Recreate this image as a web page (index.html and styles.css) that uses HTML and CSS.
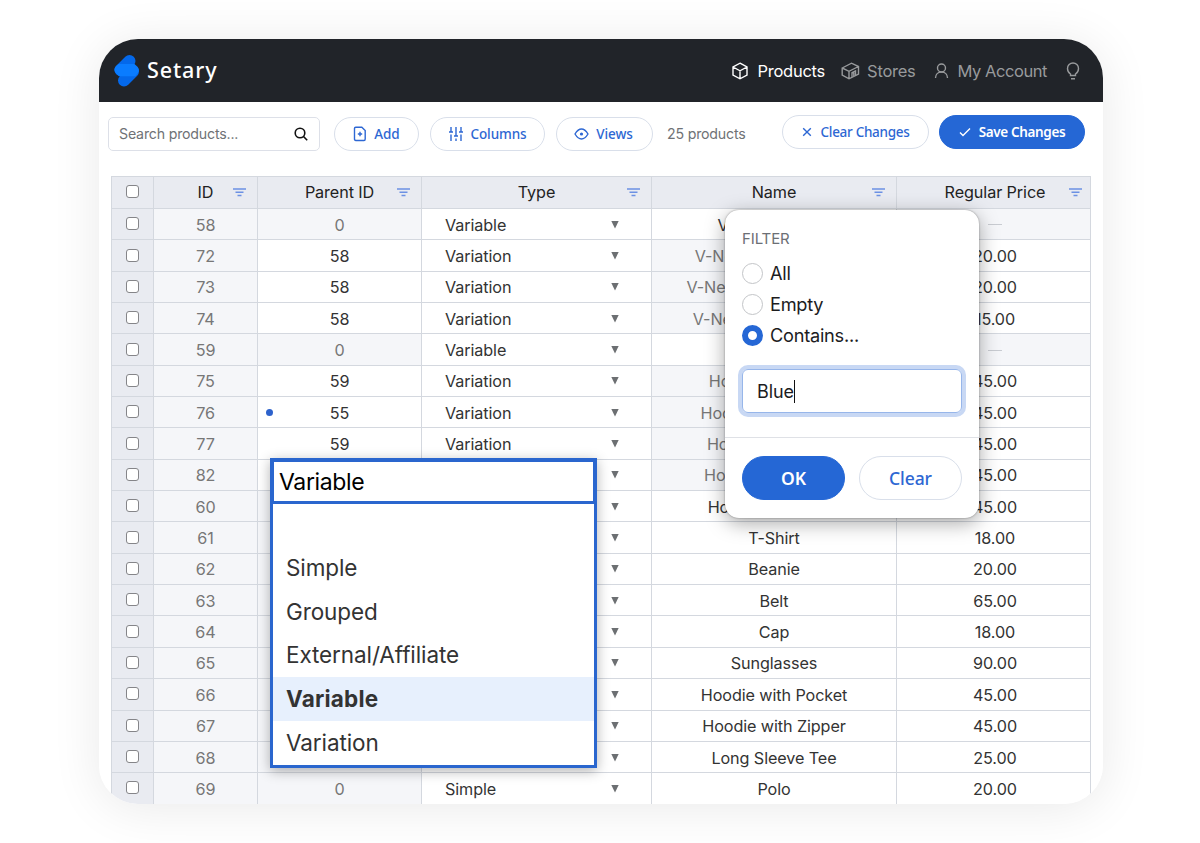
FILE: index.html
```
<!DOCTYPE html>
<html lang="en">
<head>
    <meta charset="UTF-8">
    <meta name="viewport" content="width=device-width, initial-scale=1.0">
    <title>Setary - Products</title>
    <link rel="stylesheet" href="styles.css">
</head>
<body>
    <div class="window">
        <header class="topbar">
            <div class="brand">
                <svg class="logo" width="26" height="32" viewBox="0 0 26 32">
                    <path class="logo-dark" d="M6.500 15 15.500 6M19 16.500 10 25.500"/>
                    <path d="M4.500 9H20.500L23.500 11.800Q26.500 15.500 23.200 19L21.300 21.200H5L2 18.500Q-1.200 15 1.800 11.300Z" fill="#0a7cff"/>
                </svg>
                <span class="brand-name">Setary</span>
            </div>
            <nav class="nav">
                <a class="nav-item active">
                    <svg width="18" height="18" viewBox="0 0 18 18"><path d="M9 1.200 16 5V13L9 16.800 2 13V5ZM2 5 9 8.800 16 5M9 8.800V16.800"/></svg>
                    <span>Products</span>
                </a>
                <a class="nav-item nav-stores">
                    <svg width="19" height="18" viewBox="0 0 19 18"><path d="M1.200 6 10.500 1.200 17.500 4.500V12L8 16.800 1.200 13ZM1.200 6 8 9.300 17.500 4.500M8 9.300V16.800M11 15.200V10.800L14.500 9V13.500M12.800 10V14.400"/></svg>
                    <span>Stores</span>
                </a>
                <a class="nav-item nav-account">
                    <svg width="15" height="18" viewBox="0 0 15 18"><circle cx="7.500" cy="6" r="4"/><path d="M1.500 16C1.500 12.500 4 10 7.500 10S13.500 12.500 13.500 16"/></svg>
                    <span>My Account</span>
                </a>
                <a class="nav-item nav-tips">
                    <svg width="14" height="18" viewBox="0 0 14 18"><path d="M4.500 13.500V12C2.500 10.800 1.500 9 1.500 6.500A5.500 5.500 0 0 1 12.500 6.500C12.500 9 11.500 10.800 9.500 12V13.500ZM5 16.800H9"/></svg>
                </a>
            </nav>
        </header>

        <div class="toolbar">
            <div class="search">
                <span>Search products...</span>
                <svg width="14" height="14" viewBox="0 0 14 14"><circle cx="6" cy="6" r="4.800"/><path d="M9.500 9.500 13.200 13.200"/></svg>
            </div>
            <button class="btn btn-add">
                <svg width="14" height="16" viewBox="0 0 14 16"><path d="M1.500 2.500Q1.500 1.200 2.800 1.200H8.800L12.200 4.500V13Q12.200 14.500 11 14.500H2.800Q1.500 14.500 1.500 13ZM7 5.800V10.200M4.800 8H9.200"/></svg>
                <span>Add</span>
            </button>
            <button class="btn btn-columns">
                <svg width="16" height="14" viewBox="0 0 16 14"><path d="M3 0V4.500M1 5H5M3 7.500V14M8 0V8.500M6 9H10M8 11.500V14M13 0V4.500M11 5H15M13 7.500V14"/></svg>
                <span>Columns</span>
            </button>
            <button class="btn btn-views">
                <svg width="15" height="12" viewBox="0 0 15 12"><path d="M1 6Q4 1 7.500 1T14 6Q11 11 7.500 11T1 6Z"/><circle class="solid" cx="7.500" cy="6" r="1.600"/></svg>
                <span>Views</span>
            </button>
            <span class="count">25 products</span>
            <div class="actions">
                <button class="btn btn-discard">
                    <svg width="10" height="10" viewBox="0 0 10 10"><path d="M1.200 1.200 8.800 8.800M8.800 1.200 1.200 8.800"/></svg>
                    <span>Clear Changes</span>
                </button>
                <button class="btn btn-primary btn-save">
                    <svg width="12" height="10" viewBox="0 0 12 10"><path d="M1 5.500 4 8.500 11 1.500"/></svg>
                    <span>Save Changes</span>
                </button>
            </div>
        </div>

        <div class="sheet" id="sheet"></div>

        <div class="editor">
            <div class="editor-input">Variable</div>
            <ul class="options">
                <li></li>
                <li>Simple</li>
                <li>Grouped</li>
                <li>External/Affiliate</li>
                <li class="selected">Variable</li>
                <li>Variation</li>
            </ul>
        </div>

        <div class="filter">
            <div class="filter-body">
                <h2>FILTER</h2>
                <div class="radio"><i></i><span>All</span></div>
                <div class="radio"><i></i><span>Empty</span></div>
                <div class="radio checked"><i></i><span>Contains...</span></div>
                <div class="filter-input"><span>Blue</span></div>
            </div>
            <div class="filter-footer">
                <button class="btn btn-primary">OK</button>
                <button class="btn">Clear</button>
            </div>
        </div>
    </div>

    <script>
        // id, parent, type, name, price
        const products = [
            [58, 0, "Variable", "V-Neck T-Shirt", ""],
            [72, 58, "Variation", "V-Neck T-Shirt - Red", "20.00"],
            [73, 58, "Variation", "V-Neck T-Shirt - Green", "20.00"],
            [74, 58, "Variation", "V-Neck T-Shirt - Blue", "15.00"],
            [59, 0, "Variable", "Hoodie", ""],
            [75, 59, "Variation", "Hoodie - Red, No", "45.00"],
            [76, 55, "Variation", "Hoodie - Green, No", "45.00"],
            [77, 59, "Variation", "Hoodie - Blue, No", "45.00"],
            [82, 59, "Variation", "Hoodie - Blue, Yes", "45.00"],
            [60, 0, "Simple", "Hoodie with Logo", "45.00"],
            [61, 0, "Simple", "T-Shirt", "18.00"],
            [62, 0, "Simple", "Beanie", "20.00"],
            [63, 0, "Simple", "Belt", "65.00"],
            [64, 0, "Simple", "Cap", "18.00"],
            [65, 0, "Simple", "Sunglasses", "90.00"],
            [66, 0, "Simple", "Hoodie with Pocket", "45.00"],
            [67, 0, "Simple", "Hoodie with Zipper", "45.00"],
            [68, 0, "Simple", "Long Sleeve Tee", "25.00"],
            [69, 0, "Simple", "Polo", "20.00"]
        ];

        const funnel = '<svg class="funnel" width="13" height="9" viewBox="0 0 13 9"><path d="M0 1H13M2.500 4.300H10.500M4.500 7.500H8.500"/></svg>';
        const box = '<div class="cell cell-check"><i class="checkbox"></i></div>';

        function headRow() {
            const titles = ["ID", "Parent ID", "Type", "Name", "Regular Price"];
            return `<div class="row head">${box}${titles.map(t => `<div class="cell"><span>${t}</span>${funnel}</div>`).join("")}</div>`;
        }

        function productRow([id, parent, type, name, price]) {
            const variation = type === "Variation";
            const edited = id === 76 ? " edited" : "";
            return `<div class="row">${box}
                <div class="cell locked">${id}</div>
                <div class="cell${variation ? "" : " locked"}${edited}">${parent}</div>
                <div class="cell cell-type"><span>${type}</span><svg width="8" height="8" viewBox="0 0 8 8"><path d="M.3 0H7.700L4 7.500Z"/></svg></div>
                <div class="cell${variation ? " locked" : ""}">${name}</div>
                <div class="cell cell-price${price ? "" : " locked"}">${price || '<i class="dash"></i>'}</div>
            </div>`;
        }

        document.getElementById("sheet").innerHTML = headRow() + products.map(productRow).join("");
    </script>
</body>
</html>
```
FILE: styles.css
```
* {
    box-sizing: border-box;
}

body {
    margin: 0;
    height: 843px;
    overflow: hidden;
    background: #fff;
    font-family: Inter, "Liberation Sans", sans-serif;
    color: #333;
}

svg {
    fill: none;
    stroke: currentColor;
    stroke-width: 1.4;
    flex-shrink: 0;
}

.window {
    position: relative;
    width: 1004px;
    height: 765px;
    margin: 39px 0 0 99px;
    border-radius: 39px;
    background: #fff;
    overflow: hidden;
}

body::before {
    content: "";
    position: absolute;
    left: 99px;
    top: 39px;
    width: 1004px;
    height: 765px;
    border-radius: 39px;
    box-shadow: 0 4px 50px rgba(0, 0, 0, 0.09);
}

/* top bar */
.topbar {
    display: flex;
    justify-content: space-between;
    height: 63px;
    padding: 0 23px 0 15px;
    background: #212429;
}

.brand {
    display: flex;
    align-items: center;
    gap: 7px;
}

.logo {
    margin-top: 1px;
    stroke: none;
}

.logo-dark {
    stroke: #0468ea;
    stroke-width: 12;
    stroke-linecap: round;
}

.brand-name {
    padding-bottom: 2px;
    font-family: "Noto Sans", sans-serif;
    font-size: 21.5px;
    font-weight: 500;
    letter-spacing: 0.9px;
    color: #fff;
}

.nav {
    display: flex;
    align-items: center;
    font-size: 16.5px;
    color: #989a9c;
}

.nav-item {
    display: flex;
    align-items: center;
    gap: 8px;
    letter-spacing: -0.25px;
}

.nav-item.active {
    color: #fff;
}

.nav-stores {
    gap: 7px;
    margin-left: 16px;
}

.nav-account {
    gap: 9px;
    margin-left: 18px;
    letter-spacing: -0.45px;
}

.nav-tips {
    margin-left: 19px;
}

/* toolbar */
.toolbar {
    display: flex;
    align-items: flex-start;
    height: 74px;
    padding: 15px 18px 0 9px;
}

.search {
    display: flex;
    align-items: center;
    justify-content: space-between;
    width: 212px;
    height: 34px;
    padding: 0 11px 1px 10px;
    border: 1px solid #dde0e8;
    border-radius: 5px;
    font-size: 14.2px;
    letter-spacing: -0.2px;
    color: #6f7276;
}

.search svg {
    color: #111;
    stroke-width: 1.6;
}

.btn {
    display: flex;
    align-items: center;
    justify-content: center;
    gap: 7px;
    height: 34px;
    padding: 0 0 1px;
    border: 1px solid #d9dfea;
    border-radius: 22px;
    background: #fff;
    font-family: "Noto Sans", sans-serif;
    font-size: 13.5px;
    font-weight: 500;
    letter-spacing: -0.1px;
    color: #2d67d3;
    white-space: nowrap;
}

.btn-primary {
    border-color: #2567d5;
    background: #2567d5;
    font-weight: 600;
    color: #fff;
}

.btn-add {
    width: 85px;
    margin-left: 14px;
}

.btn-columns {
    width: 115px;
    margin-left: 11px;
    gap: 6px;
}

.btn-views {
    width: 97px;
    margin-left: 11px;
    padding-right: 2px;
}

.solid {
    fill: currentColor;
    stroke: none;
}

.count {
    margin-left: 14px;
    font-size: 14.2px;
    letter-spacing: -0.2px;
    line-height: 34px;
    color: #6f7276;
}

.actions {
    display: flex;
    gap: 10px;
    margin: -2px 0 0 auto;
}

.btn-discard {
    width: 147px;
    gap: 9px;
    letter-spacing: -0.3px;
}

.btn-save {
    width: 146px;
    gap: 8px;
    letter-spacing: -0.35px;
}

/* spreadsheet */
.sheet {
    width: 980px;
    margin-left: 12px;
    border-left: 1px solid #d4d8df;
    font-size: 16.2px;
    letter-spacing: -0.1px;
}

.row {
    display: grid;
    grid-template-columns: 42px 104px 164px 230px 245px 194px;
    height: 31.35px;
}

.head {
    height: 33px;
    border-top: 1px solid #d4d8df;
    color: #222;
}

.cell {
    position: relative;
    display: flex;
    align-items: center;
    justify-content: center;
    padding-top: 1px;
    border-right: 1px solid #d4d8df;
    border-bottom: 1px solid #d4d8df;
    white-space: nowrap;
}

.locked {
    background: #f5f6f9;
    color: #777;
}

.head .cell,
.cell-check {
    padding-top: 0;
    background: #e9ebf1;
}

.head .cell {
    padding-bottom: 1px;
}

.funnel {
    position: absolute;
    right: 11px;
    top: 11px;
    color: #6c91e4;
    stroke-width: 1.5;
}

.head .cell:last-child .funnel {
    right: 8px;
}

.head .cell:last-child,
.cell-price {
    padding-left: 3px;
}

.checkbox {
    width: 13px;
    height: 13px;
    margin-bottom: 1px;
    border: 1px solid #858589;
    border-radius: 3px;
    background: #fff;
}

.cell-type {
    justify-content: space-between;
    padding: 1px 32px 0 23px;
}

.cell-type svg {
    fill: #6c6f72;
    stroke: none;
}

.dash {
    width: 14px;
    height: 1px;
    background: #c9ccd2;
}

.edited::before {
    content: "";
    position: absolute;
    left: 8px;
    top: 12px;
    width: 7px;
    height: 7px;
    border-radius: 50%;
    background: #2d62cc;
}

/* type cell editor */
.editor {
    position: absolute;
    left: 171px;
    top: 419px;
    width: 327px;
    height: 310px;
    border: 3px solid #2a66ce;
    border-top-width: 4px;
    background: #fff;
    box-shadow: 0 3px 12px rgba(0, 0, 0, 0.3);
}

.editor-input {
    height: 42px;
    padding-left: 5px;
    border: 1px solid #2a66ce;
    border-width: 0 1px 3px;
    font-size: 23px;
    letter-spacing: -0.35px;
    line-height: 40px;
    color: #000;
}

.options {
    margin: -1px 0 0;
    padding: 0;
    list-style: none;
    font-size: 22.5px;
    letter-spacing: -0.1px;
}

.options li {
    height: 43.7px;
    padding-left: 13px;
    line-height: 43.7px;
}

.options li:first-child {
    height: 43px;
}

.options .selected {
    background: #e7f0fd;
    font-weight: 700;
    letter-spacing: 0.2px;
}

/* filter popup */
.filter {
    position: absolute;
    left: 626px;
    top: 171px;
    width: 254px;
    height: 308px;
    border-radius: 14px;
    background: #fff;
    box-shadow: 0 0 2px rgba(0, 0, 0, 0.4), 0 5px 20px rgba(0, 0, 0, 0.35);
    color: #1c1c1e;
}

.filter-body {
    height: 228px;
    padding: 19px 17px 0;
    border-bottom: 1px solid #dfe1e6;
}

.filter h2 {
    margin: 0 0 14px;
    font-size: 15px;
    font-weight: 400;
    letter-spacing: -0.1px;
    line-height: 19px;
    color: #6c6f75;
}

.radio {
    display: flex;
    align-items: center;
    gap: 7px;
    height: 22px;
    margin-bottom: 9px;
    font-size: 18.2px;
    letter-spacing: -0.25px;
}

.radio i {
    width: 21px;
    height: 21px;
    border: 1px solid #c3c5c8;
    border-radius: 50%;
}

.radio.checked i {
    border: 6px solid #2567d5;
}

.filter-input {
    display: flex;
    align-items: center;
    height: 44px;
    margin-top: 23px;
    padding-left: 14px;
    border: 1px solid #97b6ea;
    border-radius: 6px;
    box-shadow: 0 0 0 4px #c8d8f4;
    font-size: 18px;
}

.filter-input span {
    padding: 1px 0;
    border-right: 1px solid #111;
    letter-spacing: -0.1px;
}

.filter-footer {
    display: flex;
    gap: 14px;
    padding: 18px 17px 0;
}

.filter-footer .btn {
    flex: 1;
    height: 44px;
    font-size: 17.5px;
}
```
